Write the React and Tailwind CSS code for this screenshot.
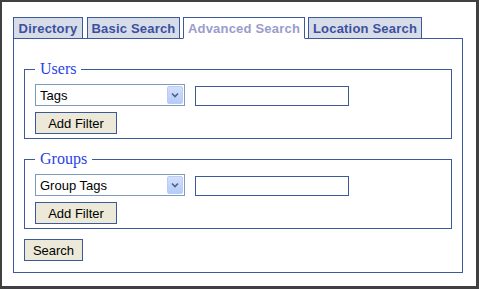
import React from "react";

function Tab({ label, active, w }) {
  return (
    <div
      className={
        "h-[22px] flex items-center justify-center whitespace-nowrap border border-[#3c5a9a] text-[13px] font-bold leading-none tracking-[0.2px] font-['Liberation_Sans',Arial,sans-serif] " +
        (active
          ? "bg-white text-[#9a9ccc] border-b-white relative z-10"
          : "bg-[#d6dde9] text-[#3d4f9e]") +
        " " + w
      }
    >
      {label}
    </div>
  );
}

function Select({ value }) {
  return (
    <div className="w-[150px] h-[22px] border border-[#7f9db9] bg-white flex items-center justify-between pl-[4px] pr-[1px]">
      <span className="text-[13px] text-black leading-none font-['Liberation_Sans',Arial,sans-serif]">{value}</span>
      <div className="w-[16px] h-[18px] rounded-[2px] border border-[#b9cdf5] bg-gradient-to-b from-[#d3e0fc] to-[#b5cbf8] flex items-center justify-center">
        <svg width="8" height="6" viewBox="0 0 8 6">
          <path d="M1 1.5 L4 4.5 L7 1.5" stroke="#4d6185" strokeWidth="1.6" fill="none" />
        </svg>
      </div>
    </div>
  );
}

function Button({ label, w }) {
  return (
    <div
      className={
        "h-[22px] border border-[#3c5a9a] bg-[#ece9d8] flex items-center justify-center text-[13px] text-black leading-none font-['Liberation_Sans',Arial,sans-serif] " +
        w
      }
    >
      {label}
    </div>
  );
}

function Group({ legend, value }) {
  return (
    <fieldset className="border border-[#3c5a9a] pl-[10px] pr-[10px] pb-[4px]">
      <legend className="px-[5px] text-[16px] leading-[16px] text-[#2a3fe6] font-['Liberation_Serif','Times_New_Roman',serif]">
        {legend}
      </legend>
      <div className="flex items-end gap-[10px] mt-[7px]">
        <Select value={value} />
        <div className="w-[154px] h-[20px] border border-[#3c5a9a] bg-white" />
      </div>
      <div className="mt-[6px]">
        <Button label="Add Filter" w="w-[82px]" />
      </div>
    </fieldset>
  );
}

export default function App() {
  return (
    <div className="w-[479px] h-[289px] bg-white border-t-2 border-l-2 border-r-[3px] border-b-[3px] border-[#404040] pl-[11px] pt-[15px]">
      <div className="flex items-end">
        <Tab label="Directory" w="w-[70px]" />
        <div className="w-[4px]" />
        <Tab label="Basic Search" w="w-[93px]" />
        <div className="w-[3px]" />
        <Tab label="Advanced Search" active w="w-[122px]" />
        <div className="w-[3px]" />
        <Tab label="Location Search" w="w-[114px]" />
      </div>
      <div className="-mt-px w-[450px] h-[235px] border border-[#3c5a9a] px-[10px] pt-[22px] flex flex-col">
        <Group legend="Users" value="Tags" />
        <div className="h-[12px]" />
        <Group legend="Groups" value="Group Tags" />
        <div className="mt-[10px]">
          <Button label="Search" w="w-[59px]" />
        </div>
      </div>
    </div>
  );
}
